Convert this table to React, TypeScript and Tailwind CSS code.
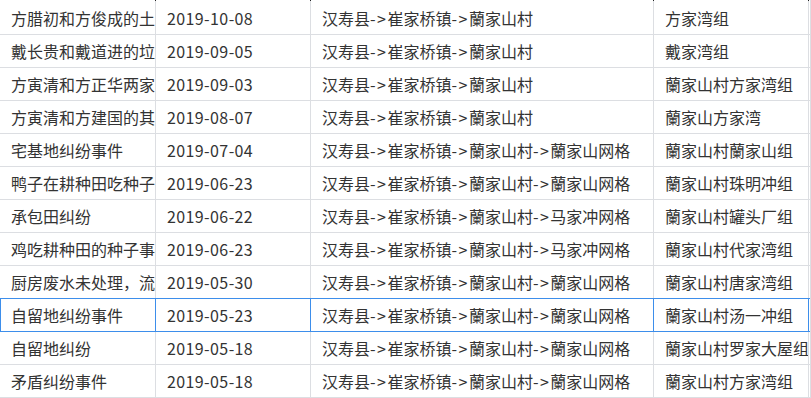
import clsx from 'clsx';

type Row = { title: string; date: string; area: string; group: string };

const A = '汉寿县->崔家桥镇->蘭家山村';
const L = '汉寿县->崔家桥镇->蘭家山村->蘭家山网格';
const M = '汉寿县->崔家桥镇->蘭家山村->马家冲网格';

const rows: Row[] = [
  { title: '方腊初和方俊成的土地纠纷', date: '2019-10-08', area: A, group: '方家湾组' },
  { title: '戴长贵和戴道进的垃圾纠纷', date: '2019-09-05', area: A, group: '戴家湾组' },
  { title: '方寅清和方正华两家纠纷', date: '2019-09-03', area: A, group: '蘭家山村方家湾组' },
  { title: '方寅清和方建国的其他纠纷', date: '2019-08-07', area: A, group: '蘭家山方家湾' },
  { title: '宅基地纠纷事件', date: '2019-07-04', area: L, group: '蘭家山村蘭家山组' },
  { title: '鸭子在耕种田吃种子事件', date: '2019-06-23', area: L, group: '蘭家山村珠明冲组' },
  { title: '承包田纠纷', date: '2019-06-22', area: M, group: '蘭家山村罐头厂组' },
  { title: '鸡吃耕种田的种子事件', date: '2019-06-23', area: M, group: '蘭家山村代家湾组' },
  { title: '厨房废水未处理，流入邻居家', date: '2019-05-30', area: L, group: '蘭家山村唐家湾组' },
  { title: '自留地纠纷事件', date: '2019-05-23', area: L, group: '蘭家山村汤一冲组' },
  { title: '自留地纠纷', date: '2019-05-18', area: L, group: '蘭家山村罗家大屋组' },
  { title: '矛盾纠纷事件', date: '2019-05-18', area: L, group: '蘭家山村方家湾组' },
];

const SELECTED = 9;
const cols = 'grid grid-cols-[156px_155px_343px_155px]';

// the path separators render a little wider in the original font
function Area({ path }: { path: string }) {
  const parts = path.split('->');
  return (
    <>
      {parts.map((p, i) => (
        <span key={i}>
          {i > 0 && <span className="tracking-[1.5px]">-&gt;</span>}
          {p}
        </span>
      ))}
    </>
  );
}

export default function App() {
  return (
    <div
      className="h-[398px] w-[811px] overflow-hidden bg-white text-[16px] text-[#333]"
      style={{ fontFamily: '"Noto Sans CJK SC", "Liberation Sans", sans-serif' }}
    >
      <div className="h-full w-[811px] border-r border-[#dcdee2]">
        {/* remnant of the header row scrolled out of view */}
        <div className={clsx(cols, 'h-px')}>
          {[0, 1, 2, 3].map((i) => (
            <div key={i} className="border-r border-[#222]" />
          ))}
        </div>
        <div className={clsx(cols, 'h-px')}>
          {[0, 1, 2, 3].map((i) => (
            <div key={i} className="border-r border-[#dcdee2]" />
          ))}
        </div>

        {rows.map((r, i) => {
          const sel = i === SELECTED;
          const line = sel ? 'border-[#3d8eeb]' : 'border-[#dcdee2]';
          const cell = 'flex items-center overflow-hidden whitespace-nowrap border-r pl-[11px]';
          return (
            <div
              key={i}
              className={clsx(
                cols,
                'border-b',
                line,
                sel ? '-mt-px h-[34px] border-t' : 'h-[33px]',
              )}
            >
              <div className={clsx(cell, line, 'pl-3', sel && 'shadow-[inset_1px_0_0_#3d8eeb]')}>
                {r.title}
              </div>
              <div className={clsx(cell, line, 'tracking-[0.4px]')}>{r.date}</div>
              <div className={clsx(cell, line)}>
                <Area path={r.area} />
              </div>
              <div className={clsx(cell, line)}>{r.group}</div>
            </div>
          );
        })}
      </div>
    </div>
  );
}
